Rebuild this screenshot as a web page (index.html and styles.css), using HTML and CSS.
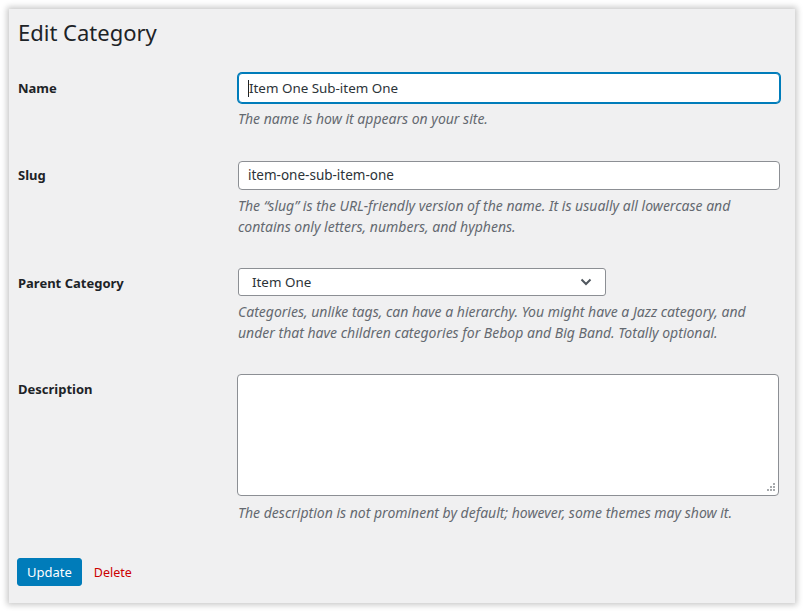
FILE: index.html
```html
<!DOCTYPE html>
<html lang="en">
<head>
<meta charset="utf-8">
<title>Edit Category</title>
<link rel="stylesheet" href="styles.css">
</head>
<body>
<div class="panel">
  <h1 class="title">Edit Category</h1>
  <div class="form">
    <div class="row row-name">
      <label class="label">Name</label>
      <div class="field">
        <div class="input focused"><span class="caret"></span>Item One Sub-item One</div>
        <p class="desc">The name is how it appears on your site.</p>
      </div>
    </div>
    <div class="row row-slug">
      <label class="label">Slug</label>
      <div class="field">
        <div class="input">item-one-sub-item-one</div>
        <p class="desc">The “slug” is the URL-friendly version of the name. It is usually all lowercase and contains only letters, numbers, and hyphens.</p>
      </div>
    </div>
    <div class="row row-parent">
      <label class="label">Parent Category</label>
      <div class="field">
        <div class="select">
          <span>Item One</span>
          <svg class="chev" width="12" height="8" viewBox="0 0 12 8"><path d="M1.5 1.5 L6 6 L10.5 1.5" fill="none" stroke="#50575e" stroke-width="2"/></svg>
        </div>
        <p class="desc">Categories, unlike tags, can have a hierarchy. You might have a Jazz category, and under that have children categories for Bebop and Big Band. Totally optional.</p>
      </div>
    </div>
    <div class="row row-desc">
      <label class="label">Description</label>
      <div class="field">
        <div class="textarea-wrap">
          <textarea class="textarea"></textarea>
          <svg class="grip" width="10" height="10" viewBox="0 0 10 10">
            <rect x="7" y="0" width="2" height="2" fill="#a7aaad"/>
            <rect x="4" y="3" width="2" height="2" fill="#a7aaad"/>
            <rect x="7" y="3" width="2" height="2" fill="#a7aaad"/>
            <rect x="1" y="6" width="2" height="2" fill="#a7aaad"/>
            <rect x="4" y="6" width="2" height="2" fill="#a7aaad"/>
            <rect x="7" y="6" width="2" height="2" fill="#a7aaad"/>
          </svg>
        </div>
        <p class="desc">The description is not prominent by default; however, some themes may show it.</p>
      </div>
    </div>
  </div>
  <div class="actions">
    <button class="btn-primary">Update</button>
    <a class="delete" href="#">Delete</a>
  </div>
</div>
</body>
</html>
```
FILE: styles.css
```css
html, body {
  margin: 0;
  padding: 0;
  background: #ffffff;
}
body {
  padding: 9px 8px 8px 9px;
  font-family: "Noto Sans", "Open Sans", sans-serif;
  color: #1d2327;
}
.panel {
  box-sizing: border-box;
  width: 786px;
  height: 594px;
  background: #f0f0f1;
  box-shadow: 0 0 6px 2px rgba(0,0,0,0.22);
  padding: 0 9px;
  display: flex;
  flex-direction: column;
}
.title {
  margin: 0;
  padding-top: 9px;
  font-size: 22px;
  line-height: 29px;
  font-weight: 400;
  color: #1d2327;
}
.form {
  display: flex;
  flex-direction: column;
  margin-top: 10px;
}
.row {
  display: grid;
  grid-template-columns: 220px 1fr;
  padding: 16px 0 15px;
}
.label {
  font-size: 13px;
  font-weight: 700;
  line-height: 21px;
  padding-top: 5px;
  color: #1d2327;
}
.field {
  display: flex;
  flex-direction: column;
}
.input {
  box-sizing: border-box;
  height: 30px;
  width: 542px;
  background: #fff;
  border: 1px solid #8c8f94;
  border-radius: 4px;
  padding: 0 9px;
  font-size: 13.4px;
  line-height: 28px;
  color: #2c3338;
  white-space: nowrap;
}
.input.focused {
  border-color: #007cba;
  box-shadow: 0 0 0 1px #007cba;
}
.caret {
  display: inline-block;
  width: 1px;
  height: 17px;
  background: #1d2327;
  vertical-align: -4px;
}
.desc {
  margin: 5px 0 0;
  font-size: 14px;
  line-height: 21px;
  font-style: italic;
  color: #646970;
  max-width: 542px;
}
.row-slug {
  padding-top: 17px;
}
.row-slug .label {
  padding-top: 4px;
}
.row-slug .input {
  height: 29px;
  font-size: 13.5px;
  line-height: 27px;
}
.select {
  box-sizing: border-box;
  width: 368px;
  height: 28px;
  background: #fff;
  border: 1px solid #8c8f94;
  border-radius: 3px;
  padding: 0 13px;
  font-size: 13.4px;
  line-height: 26px;
  color: #2c3338;
  display: flex;
  align-items: center;
  justify-content: space-between;
}
.chev {
  display: block;
}
.row-parent {
  padding-top: 16px;
}
.row-parent .label {
  padding-top: 5px;
}
.row-desc {
  padding-top: 16px;
}
.row-desc .label {
  padding-top: 5px;
}
.textarea-wrap {
  position: relative;
  width: 542px;
  height: 122px;
}
.textarea {
  display: block;
  box-sizing: border-box;
  width: 542px;
  height: 122px;
  margin: 0 0 0 -1px;
  background: #fff;
  border: 1px solid #8c8f94;
  border-radius: 4px;
  resize: none;
  outline: none;
}
.grip {
  position: absolute;
  right: 4px;
  bottom: 3px;
}
.row-desc .desc {
  margin-top: 6px;
}
.actions {
  display: flex;
  align-items: center;
  gap: 12px;
  margin-top: 20px;
  margin-left: -1px;
}
.btn-primary {
  box-sizing: border-box;
  height: 28px;
  padding: 0 9px;
  background: #007cba;
  border: 1px solid #007cba;
  border-radius: 3px;
  color: #fff;
  font-family: "Noto Sans", "Open Sans", sans-serif;
  font-size: 13px;
  line-height: 26px;
}
.delete {
  color: #c00;
  font-size: 12.5px;
  text-decoration: none;
}
```
